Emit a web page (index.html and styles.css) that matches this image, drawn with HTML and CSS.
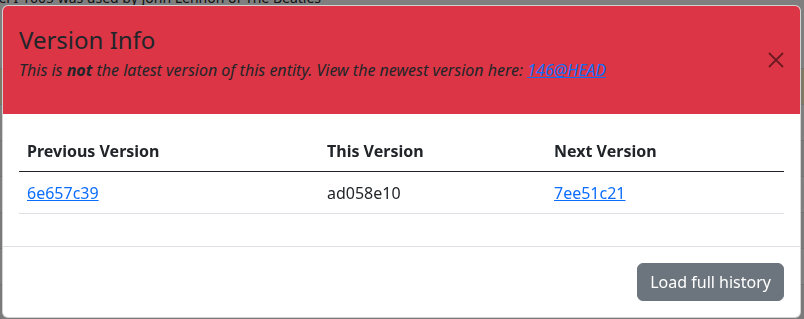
FILE: index.html
```html
<!DOCTYPE html>
<html lang="en">
<head>
    <meta charset="UTF-8">
    <meta name="viewport" content="width=device-width, initial-scale=1.0">
    <title>Version Info</title>
    <link rel="stylesheet" href="styles.css">
</head>
<body>
    <div class="page">
        <p class="page-text">The Rickenbacker 325 Model I 1605 was used by John Lennon of The Beatles</p>
        <div class="page-rows">
            <div class="page-row"></div>
            <div class="page-row highlight"></div>
            <div class="page-row"></div>
            <div class="page-row alt"></div>
            <div class="page-row"></div>
            <div class="page-row alt"></div>
            <div class="page-row"></div>
            <div class="page-row alt"></div>
        </div>
        <div class="page-footer"></div>
    </div>

    <div class="backdrop"></div>

    <div class="modal">
        <div class="modal-header">
            <div class="modal-heading">
                <h4 class="modal-title">Version Info</h4>
                <p class="modal-subtitle">This is <b>not</b> the latest version of this entity. View the newest version here: <a href="#">146@HEAD</a></p>
            </div>
            <button class="btn-close" aria-label="Close">
                <svg width="16" height="16" viewBox="0 0 16 16">
                    <path d="M1 1L15 15M15 1L1 15" stroke="currentColor" stroke-width="1.8" fill="none"/>
                </svg>
            </button>
        </div>
        <div class="modal-body">
            <table class="table">
                <thead>
                    <tr>
                        <th class="col-prev">Previous Version</th>
                        <th class="col-this">This Version</th>
                        <th>Next Version</th>
                    </tr>
                </thead>
                <tbody>
                    <tr>
                        <td><a href="#">6e657c39</a></td>
                        <td>ad058e10</td>
                        <td><a href="#">7ee51c21</a></td>
                    </tr>
                </tbody>
            </table>
        </div>
        <div class="modal-footer">
            <button class="btn btn-secondary">Load full history</button>
        </div>
    </div>
</body>
</html>
```

FILE: styles.css
```css
* {
    margin: 0;
    padding: 0;
    box-sizing: border-box;
}

body {
    font-family: "Noto Sans", "Open Sans", sans-serif;
    font-size: 16px;
    line-height: 1.5;
    color: #212529;
    background: #fff;
    height: 319px;
    overflow: hidden;
}

.page {
    display: flex;
    flex-direction: column;
    height: 319px;
}

.page-text {
    margin-top: -13px;
    white-space: nowrap;
    font-size: 14px;
    line-height: 21px;
    text-indent: -178px;
}

.page-rows {
    flex: 1;
    display: flex;
    flex-direction: column;
    padding-top: 25px;
}

.page-row {
    height: 36px;
    border-bottom: 1px solid #dee2e6;
}

.page-row.highlight {
    background: #fff3cd;
}

.page-row.alt {
    background: #f4f4f4;
}

.page-footer {
    height: 4px;
    background: #5a9c9c;
}

.backdrop {
    position: fixed;
    inset: 0;
    background: rgba(0, 0, 0, 0.5);
}

.modal {
    position: fixed;
    top: 5px;
    left: 2px;
    width: 799px;
    background: #fff;
    border: 1px solid rgba(0, 0, 0, 0.175);
    border-radius: 6px;
    overflow: hidden;
}

.modal-header {
    display: flex;
    align-items: center;
    justify-content: space-between;
    padding: 16px;
    background: #dc3545;
}

.modal-title {
    font-size: 24px;
    font-weight: 400;
    line-height: 1.5;
}

.modal-subtitle {
    font-style: italic;
    margin-bottom: 16px;
}

.modal-subtitle a,
.table a {
    color: #0d6efd;
}

.btn-close {
    width: 32px;
    height: 32px;
    margin-right: -8px;
    border: none;
    background: none;
    color: rgba(0, 0, 0, 0.5);
    display: flex;
    align-items: center;
    justify-content: center;
    cursor: pointer;
}

.modal-body {
    padding: 17px 16px 16px;
}

.table {
    width: 100%;
    border-collapse: collapse;
    margin-bottom: 16px;
}

.table th,
.table td {
    text-align: left;
    padding: 8px;
}

.table th {
    font-weight: 700;
    border-bottom: 1px solid #212529;
}

.table td {
    padding-top: 9px;
    border-bottom: 1px solid #dee2e6;
}

.col-prev {
    width: 300px;
}

.col-this {
    width: 227px;
}

.modal-footer {
    display: flex;
    justify-content: flex-end;
    padding: 12px;
    border-top: 1px solid #dee2e6;
}

.btn {
    margin: 4px;
    padding: 6px 12px;
    font-family: inherit;
    font-size: 16px;
    line-height: 1.5;
    border: 1px solid transparent;
    border-radius: 6px;
}

.btn-secondary {
    background: #6c757d;
    border-color: #6c757d;
    color: #fff;
}
```
